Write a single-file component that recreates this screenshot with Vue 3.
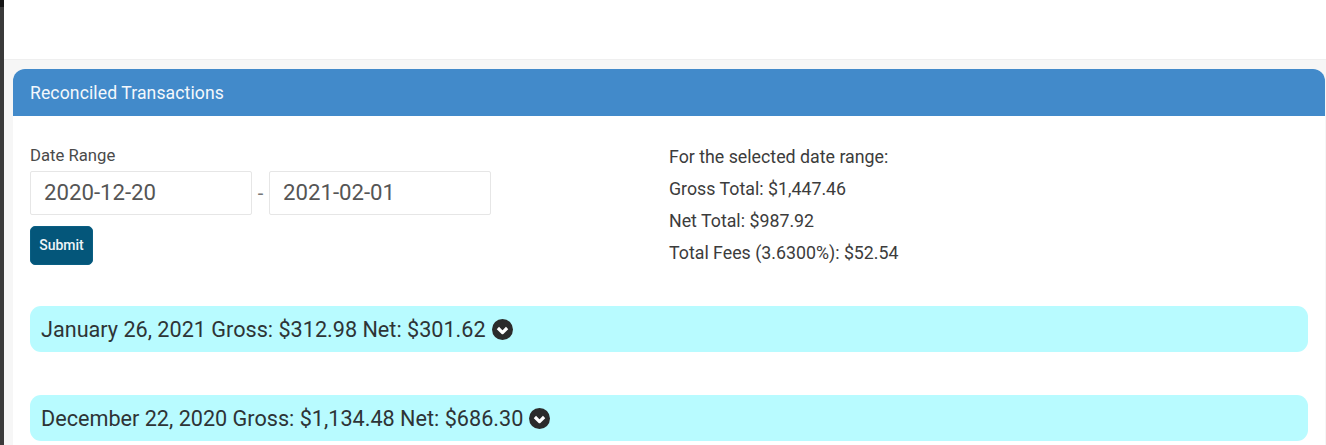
<template>
  <div class="page">
    <div class="edge"><div class="edge-top"></div></div>
    <div class="main">
      <div class="wrap">
        <section class="panel">
          <header class="panel-head">Reconciled Transactions</header>
          <div class="panel-body">
            <div class="filters">
              <form class="range" @submit.prevent>
                <label class="range-label">Date Range</label>
                <div class="range-inputs">
                  <input class="date" type="text" v-model="from" />
                  <span class="dash">-</span>
                  <input class="date" type="text" v-model="to" />
                </div>
                <button class="submit" type="submit">Submit</button>
              </form>
              <div class="totals">
                <p v-for="line in totals" :key="line">{{ line }}</p>
              </div>
            </div>
            <div class="days">
              <div class="day" v-for="day in days" :key="day">
                <span>{{ day }}</span>
                <svg class="chev" viewBox="0 0 21 21">
                  <circle cx="10.5" cy="10.5" r="10.5" fill="#2b2b2b" />
                  <path d="M5.9 9 10.5 13.6 15.1 9" fill="none" stroke="#fff" stroke-width="3.2" stroke-linejoin="round" />
                </svg>
              </div>
            </div>
          </div>
        </section>
      </div>
    </div>
  </div>
</template>

<script setup>
import { ref } from 'vue';

const from = ref('2020-12-20');
const to = ref('2021-02-01');

const totals = [
  'For the selected date range:',
  'Gross Total: $1,447.46',
  'Net Total: $987.92',
  'Total Fees (3.6300%): $52.54'
];

const days = [
  'January 26, 2021 Gross: $312.98 Net: $301.62',
  'December 22, 2020 Gross: $1,134.48 Net: $686.30'
];
</script>

<style>
html, body {
  margin: 0;
  background: #fff;
  overflow: hidden;
}
</style>

<style scoped>
.page {
  display: flex;
  height: 445px;
  overflow: hidden;
  font-family: Roboto, "Liberation Sans", sans-serif;
  color: #333;
}
.edge {
  width: 4px;
  flex: none;
  background: #3a3a3a;
}
.edge-top {
  height: 7px;
  background: #161616;
}
.main {
  flex: 1;
  min-width: 0;
  padding-top: 59px;
}
.wrap {
  height: 100%;
  padding: 9px 1px 0 9px;
  background: #f6f6f6;
  border-top: 1px solid #efefef;
  box-sizing: border-box;
}
.panel {
  height: 100%;
  background: #fff;
  border-radius: 12px 12px 0 0;
}
.panel-head {
  height: 47px;
  padding-left: 17px;
  display: flex;
  align-items: center;
  background: #428aca;
  border-radius: 12px 12px 0 0;
  color: #f4f8fc;
  font-size: 17.6px;
  letter-spacing: 0.1px;
}
.panel-body {
  padding: 30px 17px 0 17px;
}
.filters {
  display: flex;
  height: 160px;
}
.range {
  width: 639px;
  flex: none;
}
.range-label {
  display: block;
  font-size: 16.7px;
  line-height: 20px;
  color: #4a4a4a;
}
.range-inputs {
  display: flex;
  align-items: center;
  margin-top: 5px;
}
.date {
  width: 222px;
  height: 44px;
  box-sizing: border-box;
  padding: 0 13px 2px;
  border: 1px solid #e6e6e6;
  border-radius: 2px;
  background: #fff;
  font: 22.2px Roboto, "Liberation Sans", sans-serif;
  color: #555;
  outline: none;
}
.dash {
  width: 17px;
  text-align: center;
  font-size: 20px;
  color: #777;
}
.submit {
  display: block;
  width: 63px;
  height: 39px;
  margin-top: 11px;
  padding: 0 0 2px;
  border: 1px solid #0a5f83;
  border-radius: 5px;
  background: #04567a;
  color: #eef4f7;
  font: 500 14px Roboto, "Liberation Sans", sans-serif;
}
.totals {
  padding-top: 1px;
  font-size: 17.8px;
  color: #3c3c3c;
}
.totals p {
  margin: 0;
  height: 32px;
  line-height: 20px;
}
.days {
  display: flex;
  flex-direction: column;
  gap: 43px;
}
.day {
  display: flex;
  align-items: center;
  gap: 6px;
  height: 46px;
  padding-left: 11px;
  background: #b8fbff;
  border-radius: 11px;
  font-size: 21.63px;
  color: #2e3436;
}
.chev {
  width: 21px;
  height: 21px;
  flex: none;
}
</style>
